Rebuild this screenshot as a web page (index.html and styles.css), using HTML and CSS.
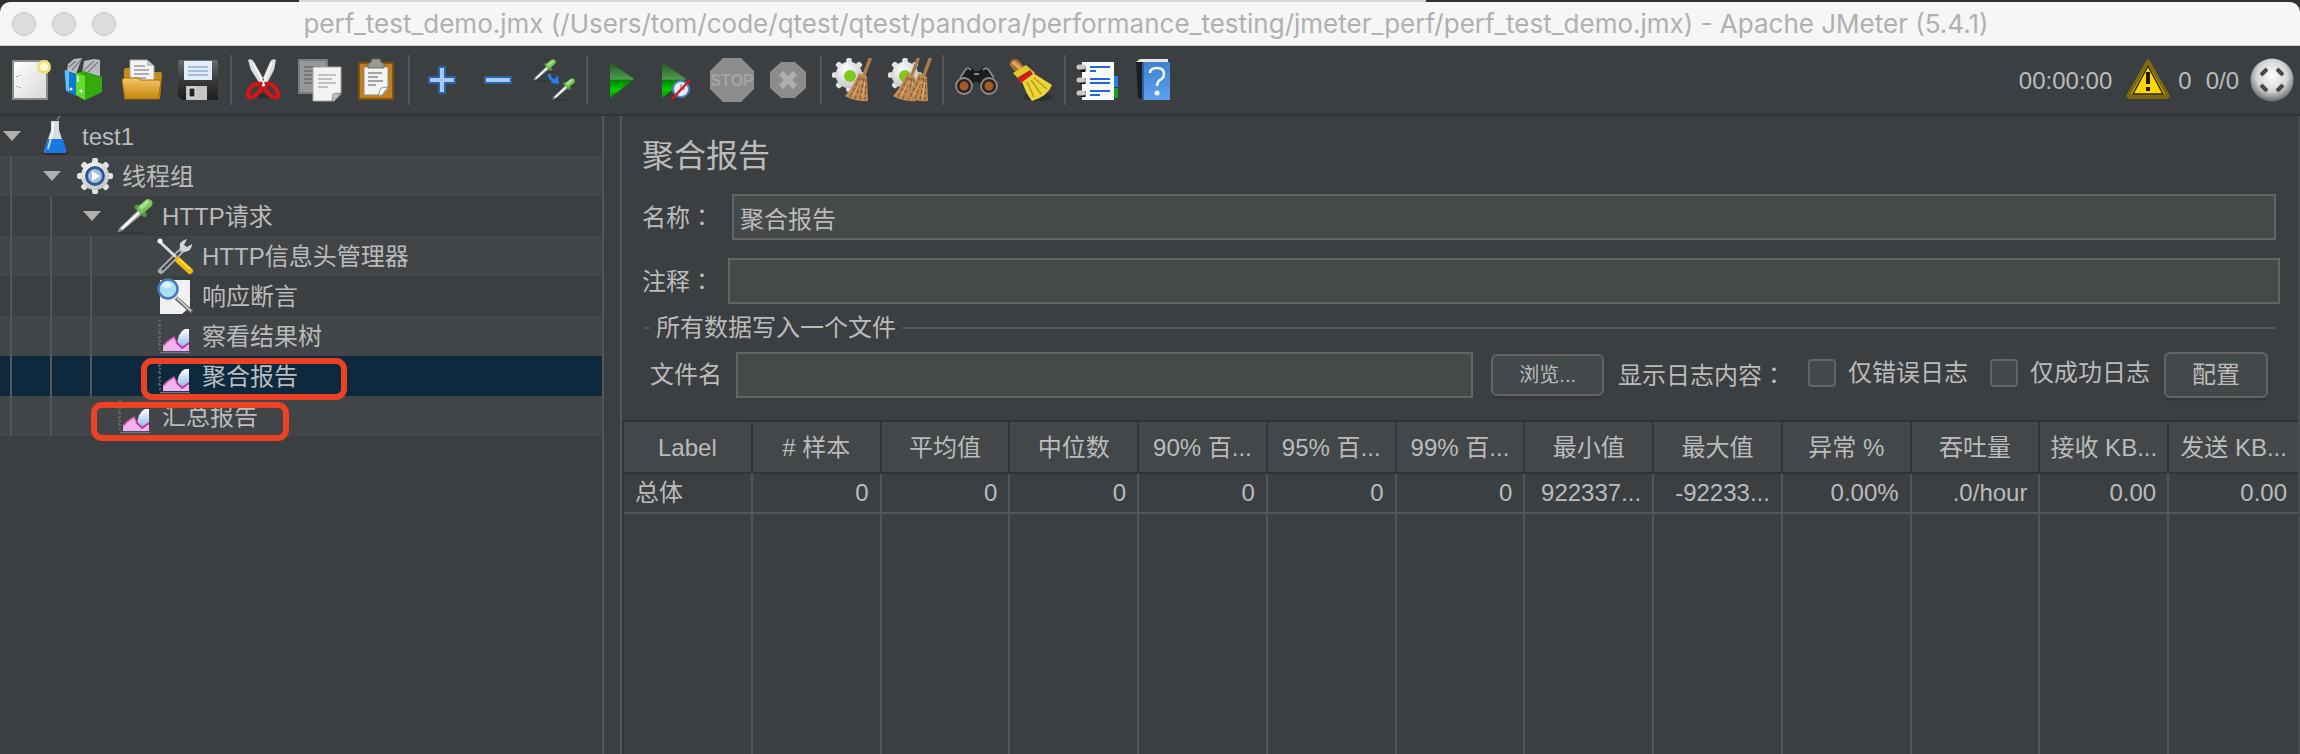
FILE: index.html
```html
<!DOCTYPE html>
<html lang="zh-CN">
<head>
<meta charset="utf-8">
<title>perf_test_demo.jmx - Apache JMeter (5.4.1)</title>
<link rel="stylesheet" href="styles.css">
</head>
<body>
<svg class="defs" aria-hidden="true">
  <defs>
    <linearGradient id="gPaper" x1="0" y1="0" x2="1" y2="1"><stop offset="0" stop-color="#ffffff"/><stop offset="1" stop-color="#d8d8d8"/></linearGradient>
    <linearGradient id="gFolder" x1="0" y1="0" x2="0" y2="1"><stop offset="0" stop-color="#f3c666"/><stop offset="1" stop-color="#c8870c"/></linearGradient>
    <linearGradient id="gPlay" x1="0" y1="0" x2="0" y2="1"><stop offset="0" stop-color="#1c5a1c"/><stop offset=".48" stop-color="#4f9a4f"/><stop offset=".5" stop-color="#007d00"/><stop offset=".78" stop-color="#00cf00"/><stop offset="1" stop-color="#128a12"/></linearGradient>
    <linearGradient id="gDisk" x1="0" y1="0" x2="0" y2="1"><stop offset="0" stop-color="#6b6b6e"/><stop offset=".5" stop-color="#3a3a3c"/><stop offset="1" stop-color="#1d1d1f"/></linearGradient>
    <linearGradient id="gBook" x1="0" y1="0" x2="0" y2="1"><stop offset="0" stop-color="#3f80cf"/><stop offset="1" stop-color="#5e9ff0"/></linearGradient>
    <radialGradient id="gBall" cx=".5" cy=".4" r=".6"><stop offset="0" stop-color="#ffffff"/><stop offset=".6" stop-color="#d5d5d5"/><stop offset="1" stop-color="#6a6a6a"/></radialGradient>
    <radialGradient id="gGear" cx=".4" cy=".3" r=".8"><stop offset="0" stop-color="#ffffff"/><stop offset="1" stop-color="#bdbdbd"/></radialGradient>
    <linearGradient id="gPeak" x1="0" y1="0" x2="0" y2="1"><stop offset="0" stop-color="#ffffff"/><stop offset="1" stop-color="#8ab4e8"/></linearGradient>

    <symbol id="gear" viewBox="0 0 36 36">
      <g fill="#e2e2e2">
        <rect x="15" y="0" width="6" height="36" rx="2"/>
        <rect x="15" y="0" width="6" height="36" rx="2" transform="rotate(45 18 18)"/>
        <rect x="15" y="0" width="6" height="36" rx="2" transform="rotate(90 18 18)"/>
        <rect x="15" y="0" width="6" height="36" rx="2" transform="rotate(135 18 18)"/>
      </g>
      <circle cx="18" cy="18" r="14" fill="url(#gGear)"/>
    </symbol>
    <symbol id="broom" viewBox="0 0 28 44">
      <path d="M26 1 20 17" stroke="#a97c50" stroke-width="3.5" stroke-linecap="round"/>
      <path d="M15 15 23 19 24 43 Q11 44 1 38 Q9 29 15 15Z" fill="#c08a55"/>
      <path d="M16 19 6 39M18 20 11 41M20 20 16 42M22 21 21 42" stroke="#83582d" stroke-width="1.2" stroke-dasharray="4 2" fill="none"/>
      <path d="M18 22 9 38M21 24 18 40" stroke="#e0b382" stroke-width="1" fill="none"/>
    </symbol>
    <symbol id="pipette" viewBox="0 0 40 38">
      <ellipse cx="16" cy="36.500" rx="14" ry="1" fill="#2f3132"/>
      <path d="M24 12 4 31 2 35 6 34 28 16Z" fill="#a6a9ab" stroke="#808283" stroke-width="1"/>
      <path d="M25 14 6 32" stroke="#f5f5f5" stroke-width="3"/>
      <path d="M22 9 30 17" stroke="#4c9a37" stroke-width="5" stroke-linecap="round"/>
      <path d="M27 11 34 5" stroke="#78c45c" stroke-width="9" stroke-linecap="round"/>
      <path d="M27 9 33 4" stroke="#a9e08f" stroke-width="4" stroke-linecap="round"/>
    </symbol>
    <symbol id="chart" viewBox="0 0 38 40">
      <path d="M4 4V36M2 10h2M2 16h2M2 22h2M2 28h2" stroke="#6d6f73" stroke-width="1.500" stroke-dasharray="2 2"/>
      <path d="M4 36.500H34" stroke="#77777c" stroke-width="1.500"/>
      <path d="M7 35V30Q11 25 15 23L18 21 22 28 33 24V35Z" fill="#f2b4ee"/>
      <path d="M7 30Q11 25 15 23L18 21 20 25" stroke="#d2589f" stroke-width="1.500" fill="none"/>
      <path d="M21 29Q22 16 29 13H33V27L28 32Z" fill="url(#gPeak)"/>
      <path d="M20 26 26 32 33 27" stroke="#c4379c" stroke-width="1.800" fill="none"/>
    </symbol>
  </defs>
</svg>

<div class="titlebar-backdrop">
<header class="titlebar">
  <div class="lights"><span></span><span></span><span></span></div>
  <h1 class="window-title">perf_test_demo.jmx (/Users/tom/code/qtest/qtest/pandora/performance_testing/jmeter_perf/perf_test_demo.jmx) - Apache JMeter (5.4.1)</h1>
</header>
</div>

<div class="toolbar" role="toolbar">
  <button class="tool" aria-label="新建"><svg viewBox="0 0 44 44"><rect x="5" y="3" width="34" height="38" fill="url(#gPaper)" stroke="#8b8b85" stroke-width="2"/><path d="M9 18v1M9 28v1M12 17v1M12 29v1" stroke="#999" stroke-width="1.500"/><circle cx="36" cy="9" r="7" fill="#efe27a"/><circle cx="36" cy="9" r="4" fill="#fffbd0"/></svg></button>
  <button class="tool" aria-label="模板"><svg viewBox="0 0 44 44"><path d="M4 6 10 1 18 0 12 16 3 13ZM20 3 30 1 36 2V18L18 16Z" fill="#b9bdc0"/><path d="M5 9 12 3M8 12 17 2M20 12 30 3M24 14 34 4" stroke="#7d8285" stroke-width="1.500"/><path d="M0 12 12 16V38L2 33Z" fill="#0a7bd0"/><path d="M1 12 5 13V34L2 32Z" fill="#6bbdf2"/><circle cx="7" cy="31" r="1.500" fill="#fff"/><path d="M12 15 20 13 38 19V34L21 42 12 37Z" fill="#2fa60e"/><path d="M12 15 21 18V42L12 37Z" fill="#64dc28"/><path d="M21 18 38 20V34L21 42Z" fill="#35a90d"/><path d="M14 18v6" stroke="#d9ffc8" stroke-width="2"/><circle cx="17" cy="33" r="1.600" fill="#fff"/></svg></button>
  <button class="tool" aria-label="打开"><svg viewBox="0 0 44 44"><path d="M4 41V12Q4 10 6 10H12L14 14H40Q42 14 42 16L40 41Z" fill="#c78a17"/><path d="M10 2H27L34 8V25H10Z" fill="#f4f4f4" stroke="#a9a9a9"/><path d="M27 2V8H34" fill="#c4c4c4"/><path d="M14 8h11M14 12h15M14 16h15M14 20h12" stroke="#999" stroke-width="1.600"/><path d="M2 23Q2 20 5 20H18L21 22H38Q41 22 41 24L38 41H5Z" fill="url(#gFolder)" stroke="#a86e08" stroke-width="1"/></svg></button>
  <button class="tool" aria-label="保存"><svg viewBox="0 0 44 44"><path d="M2 4Q2 2 4 2H40Q42 2 42 4V42H6L2 38Z" fill="url(#gDisk)"/><rect x="8" y="3" width="28" height="19" fill="#e3edf8"/><path d="M12 9h20M12 13h20M12 17h20" stroke="#8fb0d4" stroke-width="1.500"/><rect x="10" y="28" width="21" height="14" fill="#c4c4c4"/><rect x="13" y="30" width="6" height="9" fill="#222" stroke="#efefef"/></svg></button>
  <span class="tool-sep"></span>
  <button class="tool" aria-label="剪切"><svg viewBox="0 0 44 44"><ellipse cx="22" cy="38" rx="14" ry="2.500" fill="#2b2d2e"/><path d="M6 2Q10 0 12 4L25 27 20 29 9 12ZM34 2Q30 0 28 4L18 27 23 29 32 12Z" fill="#dedede"/><path d="M11 5 22 26M30 5 21 26" stroke="#fff" stroke-width="1.500"/><path d="M20 26Q9 24 6 35 5 40 10 39 17 37 20 28M23 26Q32 24 36 35 37 40 32 39 25 37 22 28" fill="none" stroke="#d91414" stroke-width="4"/><circle cx="21.500" cy="27" r="1.500" fill="#fff"/></svg></button>
  <button class="tool" aria-label="复制"><svg viewBox="0 0 44 44"><rect x="1" y="2" width="28" height="33" fill="#96999a" stroke="#7b7e7f" stroke-width="2"/><path d="M6 9h16M6 13h16M6 17h8M6 21h8M6 25h8" stroke="#6b6e6f" stroke-width="1.500"/><path d="M15 9H43V36L36 43H15Z" fill="#f3f3f2" stroke="#a5a5a0"/><path d="M20 17h18M20 21h14M20 25h18M20 29h10" stroke="#b2b2b0" stroke-width="1.600"/><path d="M43 35 35 36 34 43Z" fill="#c5c5c0" stroke="#8f8f8a"/></svg></button>
  <button class="tool" aria-label="粘贴"><svg viewBox="0 0 44 44"><rect x="5" y="5" width="34" height="36" rx="1" fill="#bd7f21" stroke="#85520b" stroke-width="2"/><path d="M10 9H34V31L27 37H10Z" fill="#f3f3f2" stroke="#8f8f8a"/><path d="M14 15h14M14 19h10M14 23h15M14 27h8" stroke="#8c8c8a" stroke-width="1.500"/><path d="M34 29 27 30 24 37H28Z" fill="#fff" stroke="#999"/><path d="M14 10V6Q18 5 18 1H26Q26 5 30 6V10Z" fill="#9a9a92" stroke="#6f6f68"/></svg></button>
  <span class="tool-sep"></span>
  <button class="tool" aria-label="全部展开"><svg viewBox="0 0 44 44"><path d="M19 9H25V19H35V25H25V35H19V25H9V19H19Z" fill="#a9c9ee" stroke="#2d63ad" stroke-width="2"/></svg></button>
  <button class="tool" aria-label="全部收起"><svg viewBox="0 0 44 44"><rect x="9" y="19" width="26" height="6" fill="#a9c9ee" stroke="#2d63ad" stroke-width="2"/></svg></button>
  <button class="tool" aria-label="切换状态"><svg viewBox="0 0 44 44"><use href="#pipette" x="0" y="1" width="25" height="23"/><use href="#pipette" x="19" y="20" width="25" height="23"/><path d="M17 16Q18 22 23 23" fill="none" stroke="#2b7df0" stroke-width="3"/><path d="M27 26 26 17 19 25Z" fill="#2b7df0"/></svg></button>
  <span class="tool-sep"></span>
  <button class="tool" aria-label="启动"><svg viewBox="0 0 44 44"><path d="M12 4 36 21 12 40Z" fill="url(#gPlay)"/></svg></button>
  <button class="tool" aria-label="不暂停启动"><svg viewBox="0 0 44 44"><path d="M8 4 32 21 8 40Z" fill="url(#gPlay)"/><circle cx="27" cy="31" r="8" fill="#e6eef5" stroke="#4c83c4" stroke-width="2"/><path d="M27 26V31H31" stroke="#999" stroke-width="1.500" fill="none"/><path d="M18 41 36 22" stroke="#d41c1c" stroke-width="2.500"/></svg></button>
  <button class="tool" aria-label="停止"><svg viewBox="0 0 44 44"><path d="M13 0H31L44 13V31L31 44H13L0 31V13Z" fill="#8c8c8c"/><text class="stop-text" x="22" y="28" text-anchor="middle">STOP</text></svg></button>
  <button class="tool" aria-label="关闭"><svg viewBox="0 0 44 44"><path d="M15 4H29L40 14V30L29 40H15L4 30V14Z" fill="#8c8c8c"/><path d="M15 15 29 29M29 15 15 29" stroke="#adadad" stroke-width="6"/></svg></button>
  <span class="tool-sep"></span>
  <button class="tool" aria-label="清除"><svg viewBox="0 0 44 44"><use href="#gear" x="0" y="0" width="34" height="34"/><circle cx="18" cy="18" r="6" fill="#82c91e"/><use href="#broom" x="12" y="0" width="28" height="44"/></svg></button>
  <button class="tool" aria-label="清除全部"><svg viewBox="0 0 44 44"><use href="#gear" x="0" y="0" width="34" height="34"/><circle cx="17" cy="18" r="6" fill="#82c91e"/><use href="#broom" x="4" y="0" width="28" height="44"/><use href="#broom" x="16" y="0" width="28" height="44"/></svg></button>
  <span class="tool-sep"></span>
  <button class="tool" aria-label="查找"><svg viewBox="0 0 44 44"><path d="M3 24 11 11Q14 7 18 10L21 13H25L28 10Q32 7 35 11L42 24 34 32H28L24 24H20L16 32H8Z" fill="#1c1c1c"/><path d="M6 20 12 11Q15 9 17 12M40 20 34 11Q31 9 29 12M20 16h5" stroke="#85898b" stroke-width="1.800" fill="none"/><circle cx="10" cy="28" r="8" fill="#2b2522" stroke="#8b8d8f" stroke-width="1.800"/><circle cx="35" cy="28" r="8" fill="#2b2522" stroke="#8b8d8f" stroke-width="1.800"/><circle cx="10" cy="28" r="4.500" fill="#a35a25"/><circle cx="35" cy="28" r="4.500" fill="#a35a25"/></svg></button>
  <button class="tool" aria-label="重置查找"><svg viewBox="0 0 44 44"><ellipse cx="28" cy="39" rx="15" ry="4" fill="#2e3031"/><path d="M5 6 14 16" stroke="#a9702c" stroke-width="10" stroke-linecap="round"/><path d="M4 5 9 9" stroke="#d9a566" stroke-width="4" stroke-linecap="round"/><path d="M3 15 16 7 25 15 12 25Z" fill="#e0c92c"/><path d="M12 23 23 15 42 27Q38 38 22 43 16 36 12 23Z" fill="#ecd53a"/><path d="M7 20 20 12 23 16 11 25Z" fill="#cf1c1c"/><path d="M17 24 24 39M21 22 31 36M24 20 37 31" stroke="#b79d13" stroke-width="1.500"/></svg></button>
  <span class="tool-sep"></span>
  <button class="tool" aria-label="函数助手"><svg viewBox="0 0 44 44"><rect x="37" y="18" width="5" height="11" fill="#2d79ea"/><rect x="37" y="30" width="5" height="10" fill="#17a217"/><rect x="6" y="4" width="32" height="38" fill="#fafafa"/><path d="M14 9h20M14 13h6M14 21h20M14 25h20M14 33h20M14 37h10" stroke="#2166e0" stroke-width="1.800"/><path d="M7 8v6M7 20v6M7 33v6" stroke="#111" stroke-width="5"/><path d="M3 9h4M3 22h4M3 35h4" stroke="#c9c9c9" stroke-width="5" stroke-linecap="round"/></svg></button>
  <button class="tool" aria-label="帮助"><svg viewBox="0 0 44 44"><path d="M4 4 8 1H36V4Z" fill="#e8e8e8"/><path d="M4 4H12V42L6 40Z" fill="#1c1c1e"/><rect x="11" y="4" width="27" height="38" fill="url(#gBook)"/><path d="M11 5V42" stroke="#2b62a8" stroke-width="2"/><path d="M18 15Q18 10 25 10T32 16Q32 20 28 22 25 24 25 28" fill="none" stroke="#f3f7fc" stroke-width="2.500"/><circle cx="25" cy="35" r="2.500" fill="#f3f7fc"/></svg></button>
  <div class="status">
    <span class="elapsed">00:00:00</span>
    <button class="status-icon" aria-label="警告"><svg viewBox="0 0 44 44"><path d="M22 3 42 38H2Z" fill="#f2cf00" stroke="#7d6b0c" stroke-width="3.500" stroke-linejoin="round"/><path d="M2 39.500H42" stroke="#7d6612" stroke-width="3"/><path d="M22 8 37 36H7Z" fill="#fbd704" stroke="#2c2606" stroke-width="1.500"/><path d="M22 14V26" stroke="#1f1b05" stroke-width="4"/><rect x="20" y="29" width="4" height="4" fill="#1f1b05"/></svg></button>
    <span class="errors">0</span>
    <span class="threads">0/0</span>
    <svg class="ball" viewBox="0 0 44 44"><circle cx="22" cy="22" r="21.500" fill="url(#gBall)"/><g fill="none" stroke="#484848" stroke-width="4"><path d="M11 17 17 11M27 11 33 17M33 27 27 33M17 33 11 27"/></g></svg>
  </div>
</div>

<main class="workspace">
  <ul class="tree" role="tree">
    <li class="row" role="treeitem"><span class="toggle open"></span><svg class="node-icon" viewBox="0 0 38 40"><ellipse cx="19" cy="37" rx="13" ry="2" fill="#2b2d2e"/><path d="M21 4 24 0" stroke="#777" stroke-width="1.500"/><path d="M15 5H23V14L30 35Q30 37 27 37H11Q8 37 8 35L15 14Z" fill="#d8dcdf"/><path d="M12 23H27L30 35Q30 37 27 37H11Q8 37 8 35Z" fill="#1a78e4"/><path d="M17 7V15L12 33" stroke="#fff" stroke-width="2" fill="none" opacity=".7"/></svg><span class="node-label">test1</span></li>
    <li class="row" role="treeitem"><span class="guide"></span><span class="toggle open"></span><svg class="node-icon" viewBox="0 0 38 40"><use href="#gear" x="1" y="2" width="36" height="36"/><circle cx="19" cy="20" r="8.500" fill="#a5bfe0" stroke="#2e5797" stroke-width="3"/><path d="M16 15 24 20 16 25Z" fill="#fff"/></svg><span class="node-label">线程组</span></li>
    <li class="row" role="treeitem"><span class="guide"></span><span class="guide"></span><span class="toggle open"></span><svg class="node-icon" viewBox="0 0 38 40"><use href="#pipette" x="0" y="2" width="38" height="37"/></svg><span class="node-label">HTTP请求</span></li>
    <li class="row" role="treeitem"><span class="guide"></span><span class="guide"></span><span class="guide"></span><span class="toggle"></span><svg class="node-icon" viewBox="0 0 38 40"><path d="M5 35 27 13" stroke="#a8abad" stroke-width="6" stroke-linecap="round"/><path d="M6 34 24 16" stroke="#3a3c3e" stroke-width="2"/><path d="M31 3Q22 5 24 13L28 16Q36 15 36 8L31 11 28 9Z" fill="#d3d5d6"/><path d="M3 5 20 21" stroke="#d8dadb" stroke-width="3"/><circle cx="4" cy="5" r="2.500" fill="#fff"/><path d="M22 24 34 35" stroke="#f2b90c" stroke-width="6" stroke-linecap="round"/><path d="M23 23 34 33" stroke="#ffe25c" stroke-width="1.500"/></svg><span class="node-label">HTTP信息头管理器</span></li>
    <li class="row" role="treeitem"><span class="guide"></span><span class="guide"></span><span class="guide"></span><span class="toggle"></span><svg class="node-icon" viewBox="0 0 38 40"><path d="M4 4H34V31L26 38H4Z" fill="#f1f1f1"/><path d="M20 22 36 36" stroke="#6e7173" stroke-width="4"/><path d="M21 22 35 35" stroke="#d8d8d8" stroke-width="1.500"/><circle cx="12" cy="13" r="9.500" fill="#a5e1f5" stroke="#4a78b5" stroke-width="2.500"/><ellipse cx="11" cy="9" rx="5" ry="3" fill="#d6f4fc"/></svg><span class="node-label">响应断言</span></li>
    <li class="row" role="treeitem"><span class="guide"></span><span class="guide"></span><span class="guide"></span><span class="toggle"></span><svg class="node-icon"><use href="#chart"/></svg><span class="node-label">察看结果树</span></li>
    <li class="row selected" role="treeitem" aria-selected="true"><span class="guide"></span><span class="guide"></span><span class="guide"></span><span class="toggle"></span><svg class="node-icon"><use href="#chart"/></svg><span class="node-label">聚合报告</span><span class="mark mark-aggregate"></span></li>
    <li class="row" role="treeitem"><span class="guide"></span><span class="guide"></span><span class="toggle"></span><svg class="node-icon"><use href="#chart"/></svg><span class="node-label">汇总报告</span><span class="mark mark-summary"></span></li>
  </ul>

  <section class="panel">
    <h2 class="panel-title">聚合报告</h2>
    <div class="field name-field"><label for="name">名称<span class="colon" lang="zh-TW">：</span></label><input id="name" type="text" value="聚合报告"></div>
    <div class="field comment-field"><label for="comment">注释<span class="colon" lang="zh-TW">：</span></label><input id="comment" type="text"></div>
    <fieldset class="group">
      <legend class="legend">所有数据写入一个文件</legend>
      <div class="file-row">
        <label class="file-label" for="file">文件名</label>
        <input class="file-input" id="file" type="text">
        <button class="btn btn-small">浏览...</button>
        <span class="log-label">显示日志内容<span class="colon" lang="zh-TW">：</span></span>
        <label class="check"><input type="checkbox">仅错误日志</label>
        <label class="check"><input type="checkbox">仅成功日志</label>
        <button class="btn">配置</button>
      </div>
    </fieldset>
    <div class="table-wrap">
      <table class="report">
        <thead>
          <tr><th>Label</th><th># 样本</th><th>平均值</th><th>中位数</th><th>90% 百...</th><th>95% 百...</th><th>99% 百...</th><th>最小值</th><th>最大值</th><th>异常 %</th><th>吞吐量</th><th>接收 KB...</th><th>发送 KB...</th></tr>
        </thead>
        <tbody>
          <tr class="data"><td>总体</td><td>0</td><td>0</td><td>0</td><td>0</td><td>0</td><td>0</td><td>922337...</td><td>-92233...</td><td>0.00%</td><td>.0/hour</td><td>0.00</td><td>0.00</td></tr>
          <tr class="rest"><td></td><td></td><td></td><td></td><td></td><td></td><td></td><td></td><td></td><td></td><td></td><td></td><td></td></tr>
        </tbody>
      </table>
    </div>
  </section>
</main>
</body>
</html>
```
FILE: styles.css
```css
* { box-sizing: border-box; }

body {
  margin: 0;
  height: 100vh;
  display: flex;
  flex-direction: column;
  overflow: hidden;
  background: #3c3f41;
  color: #bbbbbb;
  font-family: "Liberation Sans", "Noto Sans CJK SC", sans-serif;
  font-size: 24px;
  line-height: 36px;
}

.defs { position: absolute; width: 0; height: 0; }
button, input { font: inherit; color: inherit; margin: 0; }
h1, h2 { margin: 0; font-weight: normal; }

/* Window title */
.titlebar-backdrop {
  padding-top: 2px;
  background: linear-gradient(90deg, #2f3032 13%, #d8d8d8 13%, #d8d8d8 62%, #2f3032 62%);
}
.titlebar {
  display: flex;
  align-items: center;
  height: 44px;
  padding: 0 12px;
  background: #f6f6f6;
  border-bottom: 1px solid #d0d0d0;
  border-radius: 10px 10px 0 0;
}
.lights { flex: none; display: flex; gap: 16px; width: 104px; }
.lights span {
  width: 24px;
  height: 24px;
  border-radius: 50%;
  background: #dddddd;
  border: 1px solid #c8c8c8;
}
.window-title {
  flex: 1;
  padding-right: 112px;
  text-align: center;
  white-space: nowrap;
  font-family: Inter, sans-serif;
  font-size: 26px;
  color: #b0b0b0;
}

/* Toolbar */
.toolbar {
  display: flex;
  align-items: center;
  height: 70px;
  padding: 0 6px 0 2px;
  border-bottom: 2px solid #323536;
}
.tool, .status-icon {
  display: flex;
  padding: 0 6px;
  border: 0;
  background: none;
}
.status-icon { padding: 0; }
.tool svg, .status-icon svg, .ball { width: 44px; height: 44px; }
.tool-sep { width: 2px; height: 50px; margin: 0 4px; background: #555555; }
.stop-text { font: bold 16px "Liberation Sans", sans-serif; fill: #a3a3a3; }
.status { display: flex; align-items: center; margin-left: auto; }
.status span { padding-top: 2px; }
.elapsed { margin-right: 14px; }
.errors { margin: 0 14px 0 8px; }
.threads { margin-right: 11px; }

/* Split view */
.workspace {
  flex: 1;
  min-height: 0;
  display: grid;
  grid-template-columns: 604px 1fr;
  grid-template-rows: minmax(0, 1fr);
  column-gap: 16px;
  overflow: hidden;
}

/* Test plan tree */
.tree {
  margin: 0;
  padding: 0;
  list-style: none;
  border-right: 2px solid #555555;
}
.row { position: relative; display: flex; align-items: center; height: 40px; }
.row:nth-child(even) { background: #414547; }
.row.selected { background: #0d293e; }
.guide { align-self: stretch; width: 40px; padding-left: 10px; }
.guide::before { content: ""; display: block; width: 2px; height: 100%; background: #555555; }
.toggle { width: 36px; padding-left: 3px; }
.toggle.open::before {
  content: "";
  display: block;
  width: 18px;
  height: 10px;
  background: #b0b0b0;
  clip-path: polygon(0 0, 100% 0, 50% 100%);
}
.node-icon { width: 38px; height: 40px; margin-right: 8px; }
.node-label { white-space: nowrap; padding-top: 2px; }
.mark { position: absolute; z-index: 1; border: 6px solid #ee4023; border-radius: 11px; }
.mark-aggregate { left: 141px; top: 2px; width: 206px; height: 42px; }
.mark-summary { left: 91px; top: 6px; width: 198px; height: 39px; }

/* Aggregate report panel */
.panel {
  display: flex;
  flex-direction: column;
  min-width: 0;
  min-height: 0;
  border-left: 2px solid #555555;
  border-right: 2px solid #494c4e;
}
.panel-title { padding: 16px 20px 0; font-size: 32px; line-height: 48px; }
.field { display: flex; align-items: center; margin-left: 20px; }
.field label { flex: none; }
.field input, .file-input {
  flex: 1;
  min-width: 0;
  height: 46px;
  padding: 0 6px;
  background: #45494a;
  border: 2px solid #646464;
}
.name-field { margin-top: 14px; margin-right: 22px; gap: 18px; }
.comment-field { margin-top: 18px; margin-right: 18px; gap: 14px; }
.colon { font-family: "Noto Sans CJK TC", sans-serif; }

.group {
  min-width: 0;
  margin: 6px 22px 0;
  padding: 0 8px 22px 6px;
  border: 0 solid #555555;
  border-top-width: 2px;
}
.legend { padding: 0 6px; }
.file-row { display: flex; align-items: center; padding-top: 6px; white-space: nowrap; }
.file-input { margin: 0 18px 0 14px; }
.btn {
  height: 46px;
  padding: 0 26px;
  background: #43484a;
  border: 2px solid #646464;
  border-radius: 6px;
  box-shadow: 0 4px 0 -1px #36393a;
}
.btn-small { height: 42px; font-size: 20px; }
.log-label { margin: 0 22px 0 14px; }
.check { display: flex; align-items: center; gap: 12px; margin: 0 22px 4px 0; }
.check + .btn { margin-left: -8px; }
.check input {
  appearance: none;
  width: 28px;
  height: 28px;
  background: #43484a;
  border: 2px solid #646464;
  border-radius: 4px;
}

/* Results table */
.table-wrap {
  flex: 1;
  display: grid;
  min-height: 0;
  overflow: hidden;
  border-top: 2px solid #323536;
  border-left: 2px solid #323536;
}
.report { width: 100%; height: 100%; table-layout: fixed; border-collapse: separate; border-spacing: 0; }
.report th {
  height: 52px;
  padding: 2px 0 0;
  font-weight: normal;
  white-space: nowrap;
  background: #434749;
  border-right: 2px solid #323536;
  border-bottom: 2px solid #323536;
}
.report td {
  padding: 0 11px;
  text-align: right;
  white-space: nowrap;
  border-right: 2px solid #555555;
}
.report td:first-child { text-align: left; }
.report tr > :last-child { border-right: 0; }
.data td { height: 40px; border-bottom: 2px solid #555555; }
```
